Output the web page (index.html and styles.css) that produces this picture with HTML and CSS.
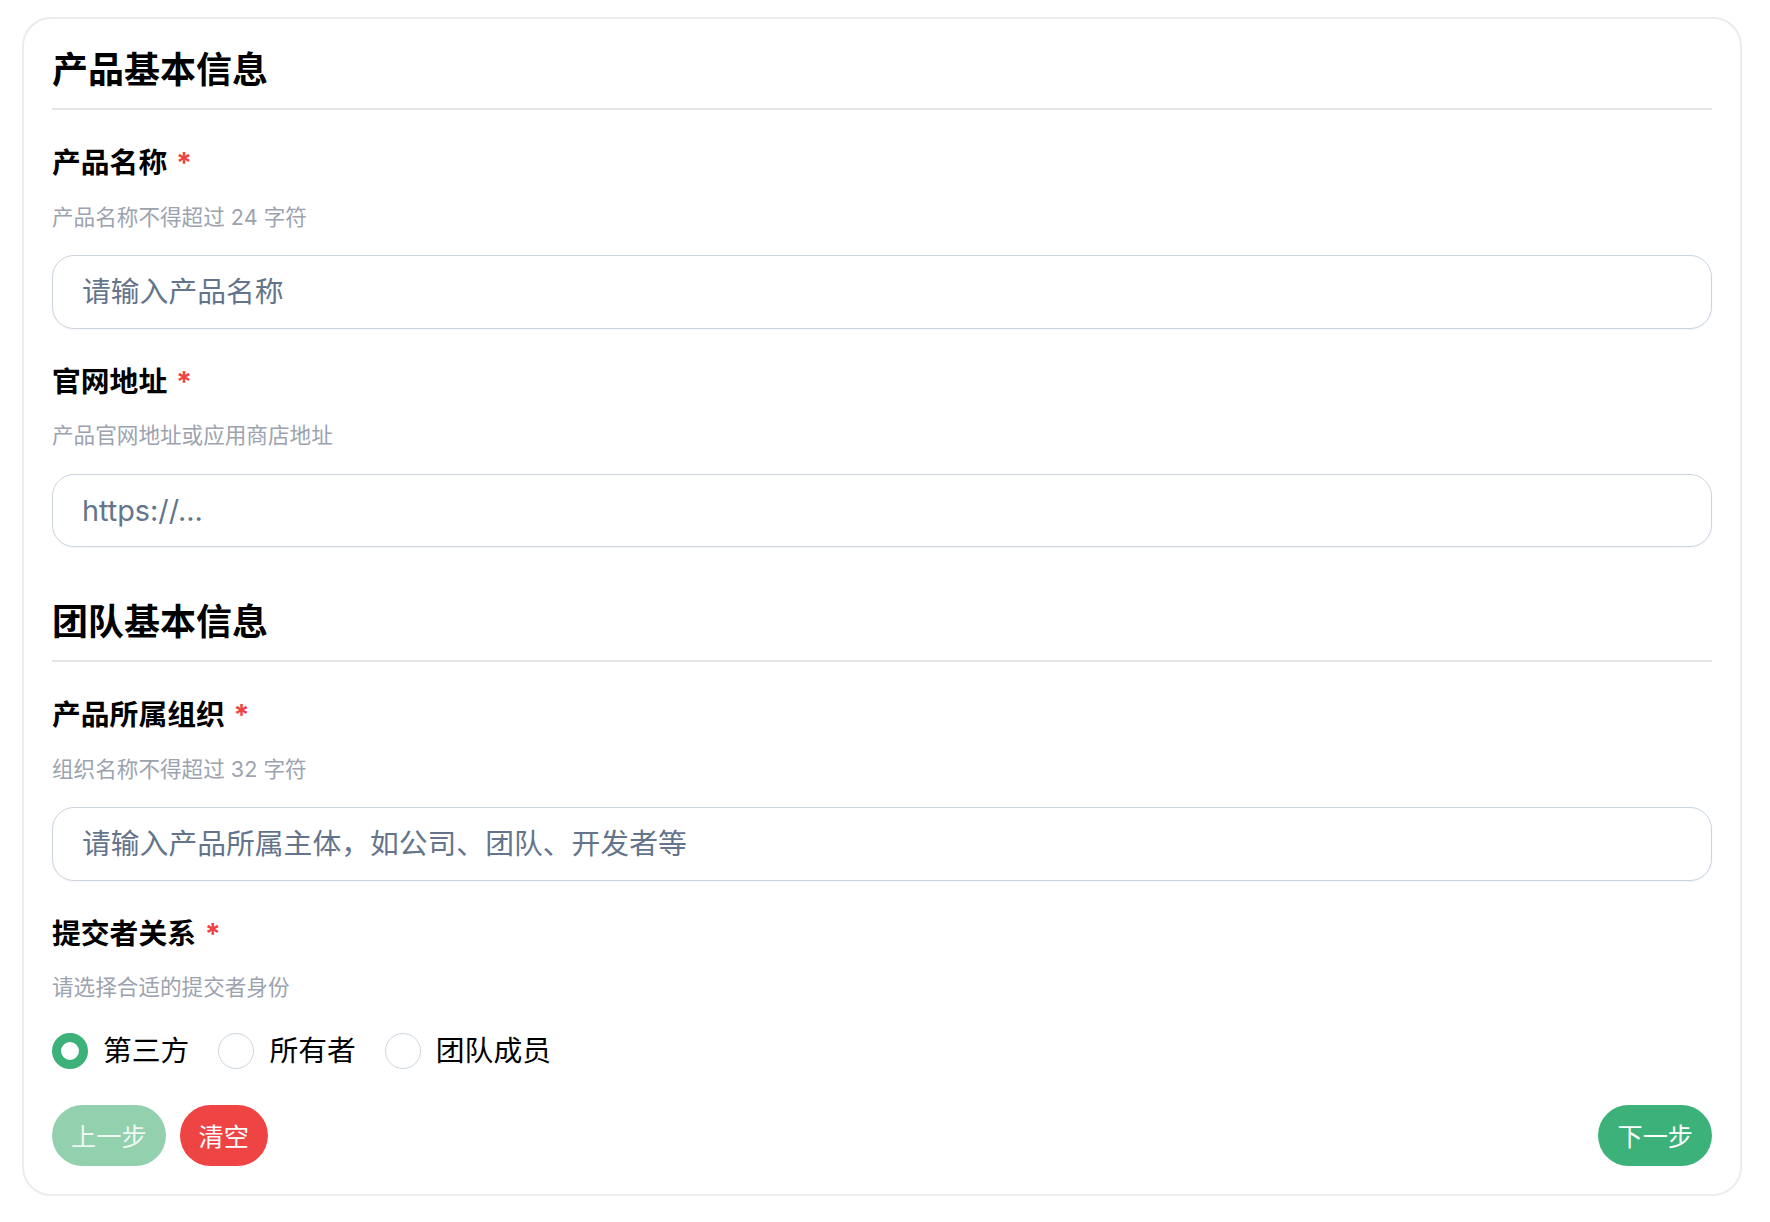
FILE: index.html
```html
<!DOCTYPE html>
<html lang="zh-CN">
<head>
  <meta charset="UTF-8">
  <meta name="viewport" content="width=device-width, initial-scale=1.0">
  <title>提交产品</title>
  <link rel="stylesheet" href="styles.css">
</head>
<body>
  <form class="card">
    <section class="section">
      <h2 class="section-title">产品基本信息</h2>

      <div class="field">
        <label class="field-label" for="productName">产品名称 <span class="required">*</span></label>
        <p class="field-hint">产品名称不得超过 24 字符</p>
        <input class="text-input" type="text" id="productName" placeholder="请输入产品名称">
      </div>

      <div class="field">
        <label class="field-label" for="website">官网地址 <span class="required">*</span></label>
        <p class="field-hint">产品官网地址或应用商店地址</p>
        <input class="text-input" type="text" id="website" placeholder="https://...">
      </div>
    </section>

    <section class="section">
      <h2 class="section-title">团队基本信息</h2>

      <div class="field">
        <label class="field-label" for="org">产品所属组织 <span class="required">*</span></label>
        <p class="field-hint">组织名称不得超过 32 字符</p>
        <input class="text-input" type="text" id="org" placeholder="请输入产品所属主体，如公司、团队、开发者等">
      </div>

      <div class="field field-radio">
        <span class="field-label">提交者关系 <span class="required">*</span></span>
        <p class="field-hint">请选择合适的提交者身份</p>
        <div class="radio-group">
          <label class="radio"><input type="radio" name="relation" value="third" checked><span>第三方</span></label>
          <label class="radio"><input type="radio" name="relation" value="owner"><span>所有者</span></label>
          <label class="radio"><input type="radio" name="relation" value="member"><span>团队成员</span></label>
        </div>
      </div>
    </section>

    <div class="actions">
      <div class="actions-left">
        <button type="button" class="btn btn-prev" disabled>上一步</button>
        <button type="reset" class="btn btn-clear">清空</button>
      </div>
      <button type="button" class="btn btn-next">下一步</button>
    </div>
  </form>
</body>
</html>
```

FILE: styles.css
```css
body {
  font-family: Inter, "Noto Sans CJK SC", sans-serif;
  background-color: #ffffff;
  color: #000000;
  margin: 0;
  padding: 17px 28px 0 22px;
}
.card {
  border: 2px solid #ececef;
  border-radius: 29px;
  padding: 29px 28px 28px 28px;
  background: #ffffff;
}
.section + .section {
  margin-top: 53px;
}
.section-title {
  font-size: 36px;
  line-height: 44px;
  font-weight: 700;
  margin: 0 0 36px;
  padding-bottom: 16px;
  border-bottom: 2px solid #e5e7eb;
}
.field {
  margin-bottom: 36px;
}
.field-label {
  display: block;
  font-size: 28.8px;
  line-height: 34px;
  font-weight: 700;
  margin-bottom: 22.5px;
}
.required {
  color: #ef4444;
  margin-left: 2px;
}
.field-hint {
  font-size: 21.6px;
  line-height: 28px;
  color: #9ca3af;
  margin: 0 0 24.5px;
}
.text-input {
  display: block;
  box-sizing: border-box;
  width: 100%;
  height: 73.5px;
  padding: 0 29px;
  border: 1.5px solid #cbd5e1;
  border-radius: 22px;
  font-family: inherit;
  font-size: 28.8px;
  color: #111827;
  background: #ffffff;
  box-shadow: 0 1px 2px rgba(15, 23, 42, 0.05);
  outline: none;
}
.text-input::placeholder {
  color: #64748b;
}
.radio-group {
  display: flex;
  align-items: center;
  gap: 29px;
  margin-top: 31.5px;
}
.radio {
  display: flex;
  align-items: center;
  gap: 15px;
  font-size: 28.8px;
  line-height: 36px;
  cursor: pointer;
}
.radio input {
  appearance: none;
  -webkit-appearance: none;
  box-sizing: border-box;
  width: 36px;
  height: 36px;
  margin: 0;
  border: 1.5px solid #cbd5e1;
  border-radius: 50%;
  background: #ffffff;
}
.radio input:checked {
  border: 9px solid #3cb179;
}
.actions {
  display: flex;
  justify-content: space-between;
  align-items: center;
}
.actions-left {
  display: flex;
  gap: 14px;
}
.btn {
  height: 61px;
  padding: 0 19px;
  border: none;
  border-radius: 31px;
  font-family: inherit;
  font-size: 25.2px;
  color: #ffffff;
  cursor: pointer;
}
.btn-prev {
  background-color: #93d1ae;
  color: #eef8f2;
  cursor: default;
}
.btn-clear {
  background-color: #ef4444;
}
.btn-next {
  background-color: #3cb179;
}
```
